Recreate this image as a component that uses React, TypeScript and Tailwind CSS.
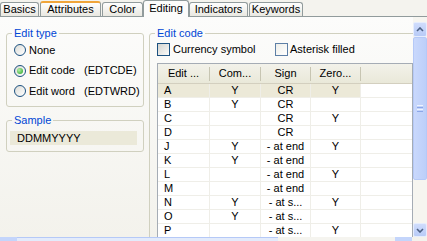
import React from "react";

const rows: [string, string, string, string][] = [
  ["A", "Y", "CR", "Y"],
  ["B", "Y", "CR", ""],
  ["C", "", "CR", "Y"],
  ["D", "", "CR", ""],
  ["J", "Y", "- at end", "Y"],
  ["K", "Y", "- at end", ""],
  ["L", "", "- at end", "Y"],
  ["M", "", "- at end", ""],
  ["N", "Y", "- at s...", "Y"],
  ["O", "Y", "- at s...", ""],
  ["P", "", "- at s...", "Y"],
];

function Tab({ label, w, ml = 0, kind }: { label: string; w: number; ml?: number; kind: "normal" | "hot" | "active" }) {
  if (kind === "active") {
    return (
      <div
        style={{ width: w, marginLeft: ml }}
        className="relative z-10 -mb-px flex h-[17px] items-center justify-center rounded-t-[3px] border border-b-0 border-[#919b9c] bg-[#fcfcfb] pb-[2px]"
      >
        {label}
      </div>
    );
  }
  return (
    <div
      style={{ width: w, marginLeft: ml }}
      className={
        "flex h-[14px] items-center justify-center rounded-t-[3px] border border-b-0 border-[#919b9c] bg-linear-to-b from-[#fefefe] to-[#e9e8e1] " +
        (kind === "hot" ? "h-[15px] border-t-[2px] border-t-[#f0a53a]" : "")
      }
    >
      {label}
    </div>
  );
}

function Radio({ checked }: { checked?: boolean }) {
  return (
    <span className="flex h-[12px] w-[12px] shrink-0 items-center justify-center rounded-full border border-[#1c5180] bg-linear-to-br from-[#dcdcd7] to-white">
      {checked && <span className="h-[6px] w-[6px] rounded-full bg-[radial-gradient(circle_at_35%_35%,#b4f0a8,#21a121)]" />}
    </span>
  );
}

function Check({ light }: { light?: boolean }) {
  return (
    <span
      className={
        "h-[13px] w-[13px] shrink-0 border bg-linear-to-br " +
        (light ? "border-[#5d7fa6] from-[#eeeee9] to-white" : "border-[#1c5180] from-[#d4d4cf] to-[#fbfbfa]")
      }
    />
  );
}

function ScrollBtn({ up, h }: { up?: boolean; h: number }) {
  return (
    <div
      style={{ height: h }}
      className="flex items-center justify-center rounded-[2px] border border-[#e6edfd] bg-linear-to-b from-[#cfdcfc] to-[#b8cbf7]"
    >
      <svg width="8" height="5" viewBox="0 0 8 5">
        <path d={up ? "M1 4 L4 1 L7 4" : "M1 1 L4 4 L7 1"} fill="none" stroke="#4d6185" strokeWidth="1.6" />
      </svg>
    </div>
  );
}

export default function App() {
  const colW = [52, 51, 50, 50];
  return (
    <div className="flex h-[241px] w-[427px] flex-col overflow-hidden bg-[#f4f3ee] font-['Liberation_Sans',Arial,sans-serif] text-[11px] leading-[13px] text-black">
      {/* tabs */}
      <div className="flex h-[16px] items-end">
        <Tab label="Basics" w={39} kind="normal" />
        <Tab label="Attributes" w={61} ml={1} kind="hot" />
        <Tab label="Color" w={41} ml={1} kind="normal" />
        <Tab label="Editing" w={46} ml={0} kind="active" />
        <Tab label="Indicators" w={59} ml={0} kind="normal" />
        <Tab label="Keywords" w={54} ml={1} kind="normal" />
      </div>

      {/* panel */}
      <div className="flex h-[221px] border-t border-[#919b9c] bg-linear-to-b from-[#fcfcfb] to-[#f3f2ec]">
        {/* left column */}
        <div className="w-[149px] shrink-0">
          <fieldset className="mt-[10px] ml-[6px] w-[138px] rounded-[3px] border border-[#d0d0bf] pb-[4px]">
            <legend className="ml-[5px] px-[2px] text-[#0046d5]">Edit type</legend>
            <div className="flex h-[20.5px] items-center pl-[7px]">
              <Radio />
              <span className="ml-[3px]">None</span>
            </div>
            <div className="flex h-[20.5px] items-center pl-[7px]">
              <Radio checked />
              <span className="ml-[3px] w-[55px]">Edit code</span>
              <span>(EDTCDE)</span>
            </div>
            <div className="flex h-[20.5px] items-center pl-[7px]">
              <Radio />
              <span className="ml-[3px] w-[55px]">Edit word</span>
              <span>(EDTWRD)</span>
            </div>
          </fieldset>

          <fieldset className="mt-[7px] ml-[6px] w-[138px] rounded-[3px] border border-[#d0d0bf] pb-[6px]">
            <legend className="ml-[5px] px-[2px] text-[#0046d5]">Sample</legend>
            <div className="mt-[4px] ml-[3px] h-[14px] w-[127px] bg-[#ebe9d9] pl-[7px] leading-[14px]">DDMMYYYY</div>
          </fieldset>
        </div>

        {/* right column */}
        <div className="w-[264px] shrink-0 overflow-hidden">
          <fieldset className="mt-[10px] w-[290px] rounded-[3px] border border-[#d0d0bf] pb-[4px]">
            <legend className="ml-[5px] px-[2px] text-[#0046d5]">Edit code</legend>
            <div className="mt-[3px] flex h-[13px] items-center pl-[7px]">
              <div className="flex w-[118px] items-center">
                <Check />
                <span className="ml-[3px]">Currency symbol</span>
              </div>
              <Check light />
              <span className="ml-[2px]">Asterisk filled</span>
            </div>

            {/* table */}
            <div className="mt-[7px] ml-[7px] w-[256px] border-x border-t border-[#a5acb5] bg-white">
              <div className="flex h-[20px] border-b border-[#d3cfbf] bg-linear-to-b from-[#f3f2ea] to-[#e9e8d9]">
                {["Edit ...", "Com...", "Sign", "Zero..."].map((h, i) => (
                  <div key={h} style={{ width: colW[i] }} className="flex items-center">
                    <span className="flex-1 text-center">{h}</span>
                    <span className="h-[14px] w-px bg-[#c7c5b2]" />
                  </div>
                ))}
                <div className="flex-1" />
              </div>
              {rows.map((r, ri) => (
                <div key={r[0]} className="flex h-[14px] border-b border-[#efeee8]">
                  {r.map((c, ci) => (
                    <div
                      key={ci}
                      style={{ width: colW[ci] }}
                      className={
                        "h-[13px] border-r border-[#efeee8] leading-[13px] " +
                        (ci === 0 ? "pl-[6px] " : "text-center ") +
                        (ri === 0 ? "bg-[#ece9d8]" : "")
                      }
                    >
                      {c}
                    </div>
                  ))}
                  <div className="flex-1" />
                </div>
              ))}
            </div>
          </fieldset>
        </div>

        {/* vertical scrollbar */}
        <div className="flex w-[14px] shrink-0 flex-col bg-[#f6f5f0] pt-[5px]">
          <ScrollBtn up h={15} />
          <div className="flex h-[143px] items-center justify-center rounded-[2px] border border-[#b5c9f7] bg-linear-to-r from-[#c9d8fc] to-[#bccff9]">
            <div className="flex w-[6px] flex-col gap-px">
              <span className="h-px bg-[#eef3fe]" />
              <span className="h-px bg-[#8ca7e8]" />
              <span className="h-px bg-[#eef3fe]" />
              <span className="h-px bg-[#8ca7e8]" />
            </div>
          </div>
          <div className="h-[43px]" />
          <ScrollBtn h={14} />
        </div>
      </div>

      {/* bottom strip */}
      <div className="flex h-[4px]">
        <div className="w-[17px] bg-[#c4d5fb]" />
        <div className="w-[261px] border-t border-[#b5c9f7] bg-[#e3ebfb]" />
        <div className="w-[117px] bg-[#f5f4ef]" />
        <div className="w-[17px] bg-[#c4d5fb]" />
        <div className="flex-1 bg-[#f3f2ec]" />
      </div>
    </div>
  );
}
